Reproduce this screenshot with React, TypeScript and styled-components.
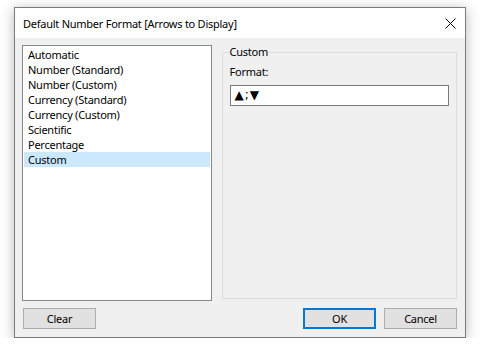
import React from 'react';
import styled, { createGlobalStyle } from 'styled-components';

const GlobalStyle = createGlobalStyle`
  html, body {
    margin: 0;
    padding: 0;
    background: #ffffff;
  }
  body {
    font-family: 'Noto Sans', 'Open Sans', sans-serif;
    font-size: 11px;
    letter-spacing: -0.25px;
    color: #000000;
  }
`;

const Page = styled.div`
  padding: 7px 0 0 14px;
`;

const Window = styled.div`
  box-sizing: border-box;
  width: 452px;
  height: 331px;
  border: 1px solid #7a7a7a;
  background: #f0f0f0;
  box-shadow: 0 2px 12px rgba(0, 0, 0, 0.28);
  display: flex;
  flex-direction: column;
`;

const TitleBar = styled.div`
  height: 30px;
  background: #ffffff;
  display: flex;
  align-items: center;
  justify-content: space-between;
  padding: 0 0 0 8px;
`;

const Title = styled.span`
  font-size: 11px;
  line-height: 15px;
  padding-top: 1px;
`;

const CloseButton = styled.div`
  width: 30px;
  height: 30px;
  display: flex;
  align-items: center;
  justify-content: center;
`;

const Body = styled.div`
  flex: 1;
  padding: 7px 8px 0 7px;
  display: flex;
  flex-direction: column;
  gap: 7px;
`;

const MainRow = styled.div`
  display: flex;
  gap: 10px;
  height: 256px;
`;

const ListBox = styled.ul`
  box-sizing: border-box;
  width: 190px;
  height: 256px;
  margin: 0;
  padding: 1px;
  list-style: none;
  background: #ffffff;
  border: 1px solid #828790;
`;

const ListItem = styled.li<{ $selected?: boolean }>`
  height: 15px;
  line-height: 15px;
  padding-left: 4px;
  white-space: nowrap;
  background: ${(p) => (p.$selected ? '#cce8ff' : 'transparent')};
`;

const Group = styled.fieldset`
  box-sizing: border-box;
  width: 236px;
  height: 254px;
  margin: 0;
  padding: 0 7px;
  border: 1px solid #dcdcdc;
`;

const Legend = styled.legend`
  padding: 0;
  line-height: 14px;
`;

const FieldLabel = styled.div`
  margin-top: 5px;
  line-height: 15px;
`;

const FormatInput = styled.div`
  box-sizing: border-box;
  width: 219px;
  height: 21px;
  margin-top: 6px;
  border: 1px solid #7a7a7a;
  background: #ffffff;
  padding: 0 4px;
  line-height: 19px;
  font-family: 'DejaVu Sans', sans-serif;
  font-size: 12px;
  letter-spacing: 1px;
`;

const ButtonRow = styled.div`
  display: flex;
  align-items: center;
  padding-left: 1px;
  gap: 8px;
`;

const Spacer = styled.div`
  flex: 1;
`;

const DialogButton = styled.div<{ $default?: boolean }>`
  box-sizing: border-box;
  width: 73px;
  height: 21px;
  display: flex;
  align-items: center;
  justify-content: center;
  background: #e1e1e1;
  border: ${(p) => (p.$default ? '2px solid #0078d7' : '1px solid #adadad')};
`;

const lists = [
  'Automatic',
  'Number (Standard)',
  'Number (Custom)',
  'Currency (Standard)',
  'Currency (Custom)',
  'Scientific',
  'Percentage',
  'Custom',
];

export default function App() {
  return (
    <>
      <GlobalStyle />
      <Page>
        <Window>
          <TitleBar>
            <Title>Default Number Format [Arrows to Display]</Title>
            <CloseButton>
              <svg width="11" height="11" viewBox="0 0 11 11">
                <path d="M0.5 0.5 L10.5 10.5 M10.5 0.5 L0.5 10.5" stroke="#000" strokeWidth="1" />
              </svg>
            </CloseButton>
          </TitleBar>
          <Body>
            <MainRow>
              <ListBox>
                {lists.map((item) => (
                  <ListItem key={item} $selected={item === 'Custom'}>
                    {item}
                  </ListItem>
                ))}
              </ListBox>
              <Group>
                <Legend>Custom</Legend>
                <FieldLabel>Format:</FieldLabel>
                <FormatInput>▲;▼</FormatInput>
              </Group>
            </MainRow>
            <ButtonRow>
              <DialogButton>Clear</DialogButton>
              <Spacer />
              <DialogButton $default>OK</DialogButton>
              <DialogButton>Cancel</DialogButton>
            </ButtonRow>
          </Body>
        </Window>
      </Page>
    </>
  );
}
